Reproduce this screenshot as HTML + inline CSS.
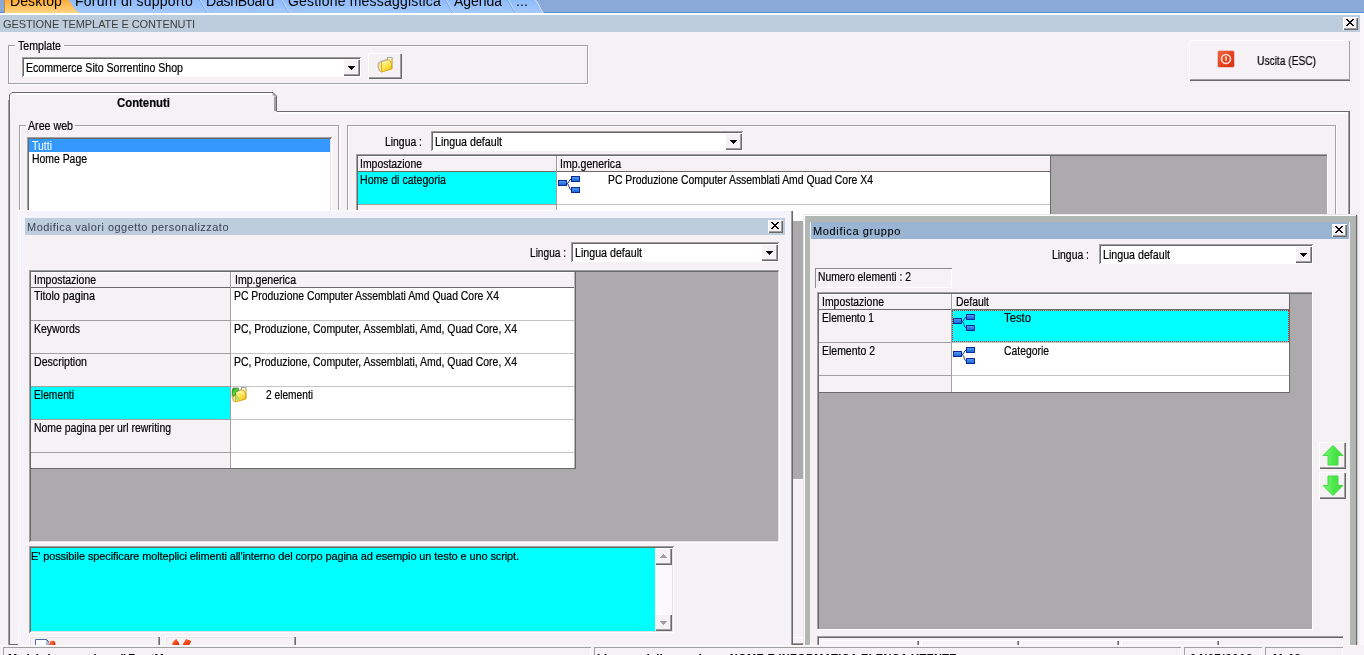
<!DOCTYPE html>
<html><head><meta charset="utf-8"><title>Gestione template e contenuti</title>
<style>
html,body{margin:0;padding:0;}
body{width:1364px;height:655px;overflow:hidden;position:relative;background:#f5f1f5;font-family:"Liberation Sans",sans-serif;font-size:11px;}
div,span,svg{position:absolute;box-sizing:border-box;}
span{white-space:pre;-webkit-text-stroke:0.2px currentColor;}
#w{left:0;top:0;width:1364px;height:655px;overflow:hidden;will-change:transform;}
</style></head><body><div id="w">
<div style="left:0px;top:0px;width:1364px;height:12px;background:#8aa9d7;"></div><div style="left:0px;top:12px;width:1364px;height:1px;background:#5f8fd6;"></div><div style="left:0px;top:13px;width:1364px;height:2px;background:#ffffff;"></div><svg style="left:0;top:0" width="560" height="13" viewBox="0 0 560 13">
<defs>
<linearGradient id="og" x1="0" y1="0" x2="0" y2="1"><stop offset="0" stop-color="#ffab35"/><stop offset="1" stop-color="#ffd585"/></linearGradient>
<linearGradient id="bl" x1="0" y1="0" x2="0" y2="1"><stop offset="0" stop-color="#8fbcfb"/><stop offset="1" stop-color="#a3c9ff"/></linearGradient>
</defs>
<path d="M60 0 L535 0 C538.5 3 539 9 543 13 L60 13 Z" fill="url(#bl)"/>
<path d="M199.1 0 C202.1 3 203.1 9 207.6 13" fill="none" stroke="#7ea6e2" stroke-width="1"/>
<path d="M200.2 0 C203.2 3 204.2 9 208.7 13" fill="none" stroke="#c4dcff" stroke-width="1"/>
<path d="M280.9 0 C283.9 3 284.9 9 289.4 13" fill="none" stroke="#7ea6e2" stroke-width="1"/>
<path d="M282.0 0 C285.0 3 286.0 9 290.5 13" fill="none" stroke="#c4dcff" stroke-width="1"/>
<path d="M445.2 0 C448.2 3 449.2 9 453.7 13" fill="none" stroke="#7ea6e2" stroke-width="1"/>
<path d="M446.3 0 C449.3 3 450.3 9 454.8 13" fill="none" stroke="#c4dcff" stroke-width="1"/>
<path d="M507.2 0 C510.2 3 511.2 9 515.7 13" fill="none" stroke="#7ea6e2" stroke-width="1"/>
<path d="M508.3 0 C511.3 3 512.3 9 516.8 13" fill="none" stroke="#c4dcff" stroke-width="1"/>
<path d="M535.5 0 C539 3 539.5 9 543.5 13" fill="none" stroke="#d8e8ff" stroke-width="1"/>
<path d="M4 0 L68 0 C73 4 73 10 80 13 L4 13 Z" fill="url(#og)"/>
<path d="M4.5 0 V13" stroke="#b98a4a" stroke-width="1"/>
</svg><span style="left:10px;top:-7px;font-size:14px;line-height:16px;color:#000;letter-spacing:0.092px;-webkit-text-stroke:0;">Desktop</span><span style="left:75px;top:-7px;font-size:14px;line-height:16px;color:#000;letter-spacing:0.258px;-webkit-text-stroke:0;">Forum di supporto</span><span style="left:206px;top:-7px;font-size:14px;line-height:16px;color:#000;letter-spacing:-0.227px;-webkit-text-stroke:0;">DashBoard</span><span style="left:288px;top:-7px;font-size:14px;line-height:16px;color:#000;letter-spacing:0.198px;-webkit-text-stroke:0;">Gestione messaggistica</span><span style="left:454px;top:-7px;font-size:14px;line-height:16px;color:#000;letter-spacing:-0.047px;-webkit-text-stroke:0;">Agenda</span><span style="left:516px;top:-7px;font-size:14px;line-height:16px;color:#000;letter-spacing:0.109px;-webkit-text-stroke:0;">...</span><div style="left:0px;top:15px;width:1360px;height:17px;background:#becddd;"></div><div style="left:1360px;top:15px;width:4px;height:640px;background:#f9f7fa;"></div><span style="left:3px;top:18px;font-size:11px;line-height:13px;color:#3c3c3c;letter-spacing:-0.088px;-webkit-text-stroke:0;">GESTIONE TEMPLATE E CONTENUTI</span><div style="left:1343px;top:17px;width:15px;height:13px;background:#f5f1f5;box-shadow: inset 1px 1px 0 #ffffff, inset -1px -1px 0 #696969, inset -2px -2px 0 #a0a0a0;"></div><svg style="left:1346px;top:19px" width="9" height="8" shape-rendering="crispEdges"><path d="M0 0h2v1h-2zM6 0h2v1h-2zM1 1h2v1h-2zM5 1h2v1h-2zM2 2h4v1h-4zM3 3h2v1h-2zM2 4h4v1h-4zM1 5h2v1h-2zM5 5h2v1h-2zM0 6h2v1h-2zM6 6h2v1h-2z" fill="#000"/></svg><div style="left:9px;top:46px;width:580px;height:39px;border:1px solid #ffffff;box-sizing:border-box;"></div><div style="left:8px;top:45px;width:580px;height:39px;border:1px solid #a0a0a0;box-sizing:border-box;"></div><div style="left:15px;top:40px;width:49px;height:12px;background:#f5f1f5;"></div><span style="left:18px;top:39px;font-size:12px;line-height:14px;color:#000;transform:scaleX(0.8829);transform-origin:0 0;">Template</span><div style="left:22px;top:57px;width:339px;height:20px;background:#fff;box-shadow: inset 1px 1px 0 #a0a0a0, inset -1px -1px 0 #ffffff, inset 2px 2px 0 #696969;"></div><div style="left:343px;top:59px;width:17px;height:17px;background:#f5f1f5;box-shadow: inset 1px 1px 0 #ffffff, inset -1px -1px 0 #696969, inset -2px -2px 0 #a0a0a0;"></div><svg style="left:348px;top:66px" width="7" height="4" shape-rendering="crispEdges"><path d="M0 0h7v1h-7zM1 1h5v1h-5zM2 2h3v1h-3zM3 3h1v1h-1z" fill="#000"/></svg><span style="left:26px;top:61px;font-size:12px;line-height:14px;color:#000;transform:scaleX(0.8816);transform-origin:0 0;">Ecommerce Sito Sorrentino Shop</span><div style="left:368px;top:53px;width:34px;height:26px;background:#f5f1f5;box-shadow: inset 1px 1px 0 #ffffff, inset -1px -1px 0 #696969, inset -2px -2px 0 #a0a0a0;"></div><svg style="left:377px;top:57px" width="17" height="17" viewBox="0 0 17 17"><defs>
<linearGradient id="fb1" x1="0" y1="0" x2="0" y2="1"><stop offset="0" stop-color="#ffffff"/><stop offset="0.5" stop-color="#fff6c8"/><stop offset="1" stop-color="#ffe060"/></linearGradient>
<linearGradient id="ff1" x1="0" y1="0" x2="0.6" y2="1"><stop offset="0" stop-color="#fff8b8"/><stop offset="0.5" stop-color="#ffe95a"/><stop offset="1" stop-color="#f6c81c"/></linearGradient>
<linearGradient id="fl1" x1="0" y1="0" x2="1" y2="0"><stop offset="0" stop-color="#f2c040"/><stop offset="0.6" stop-color="#fff2b8"/><stop offset="1" stop-color="#f0c848"/></linearGradient>
</defs>
<path d="M10.5 0.5 H15 V11.6 L10.5 13 Z" fill="url(#fb1)" stroke="#c8920e" stroke-width="1"/>
<path d="M10.2 0.4 H15.4" stroke="#8fb0f0" stroke-width="0.9"/>
<path d="M4.5 4.7 L10.4 3 L12.8 3.3 L14.4 6.4 V12 L4.5 15 Z" fill="url(#ff1)" stroke="#d8a414" stroke-width="0.9"/>
<path d="M6 5.6 C9.5 4.4 12 5 13.4 8.2" fill="none" stroke="#fffbd8" stroke-width="0.8" opacity="0.8"/>
<path d="M1.4 6.6 L4.5 4.7 V15 L2.6 14 L1.4 10.2 Z" fill="url(#fl1)" stroke="#d8a82a" stroke-width="0.8"/>
<path d="M1 6.2 L4.4 4.1 L10.2 2.4" stroke="#9db6f2" stroke-width="0.9" fill="none"/>
<path d="M0.9 6.5 L1 10.5 L2.2 14.2" stroke="#a8bcf0" stroke-width="0.7" fill="none"/>
</svg><div style="left:1189px;top:40px;width:161px;height:41px;background:#f5f1f5;box-shadow: inset 1px 1px 0 #ffffff, inset 0 -1px 0 #696969, inset -1px 0 0 #a0a0a0, inset 0 -2px 0 #a0a0a0;"></div><svg style="left:1217px;top:50px" width="18" height="18" viewBox="0 0 18 18">
<defs><linearGradient id="rg" x1="0" y1="0" x2="1" y2="1"><stop offset="0" stop-color="#f06848"/><stop offset="0.5" stop-color="#e8421c"/><stop offset="1" stop-color="#d83010"/></linearGradient></defs>
<rect x="0.5" y="0.5" width="17" height="17" rx="2" fill="url(#rg)" stroke="#e0c8c8" stroke-width="1"/>
<circle cx="9" cy="9" r="4.5" fill="none" stroke="#fbe0d8" stroke-width="1.6"/>
<rect x="8.2" y="6.4" width="1.6" height="4.4" fill="#fbe0d8"/>
</svg><span style="left:1257px;top:54px;font-size:12px;line-height:14px;color:#000;transform:scaleX(0.8508);transform-origin:0 0;">Uscita (ESC)</span><div style="left:277px;top:111px;width:1073px;height:540px;border-top:1px solid #696969;border-right:2px solid #696969;border-left:0;box-sizing:border-box;"></div><div style="left:277px;top:112px;width:1072px;height:2px;background:#ffffff;"></div><div style="left:1348px;top:112px;width:1px;height:540px;background:#a0a0a0;"></div><svg style="left:8px;top:91px" width="271" height="22" viewBox="8 91 271 22">
<path d="M9.5 113 V95 L12 92.5 H273 L276.5 96 V111.5" fill="#f5f1f5" stroke="none"/>
<path d="M10.5 113 V95.5 L12.5 93.5 H272.5" fill="none" stroke="#fff" stroke-width="1"/>
<path d="M11 94.5 H273" fill="none" stroke="#fff" stroke-width="1"/>
<path d="M275 96.5 V111" fill="none" stroke="#a0a0a0" stroke-width="2"/>
<path d="M272.5 93.5 L275 96" fill="none" stroke="#a0a0a0" stroke-width="1.6"/>
<path d="M9.5 113 V95 L12 92.5 H273 L276.5 96 V111.5" fill="none" stroke="#696969" stroke-width="1"/>
</svg><div style="left:8px;top:100px;width:2px;height:545px;background:#696969;"></div><div style="left:8px;top:100px;width:1px;height:545px;background:#a0a0a0;"></div><div style="left:9px;top:644px;width:9px;height:1px;background:#696969;"></div><span style="left:117px;top:96px;font-size:12px;line-height:14px;color:#000;transform:scaleX(0.9464);transform-origin:0 0;font-weight:bold;">Contenuti</span><div style="left:20px;top:126px;width:320px;height:119px;border:1px solid #ffffff;box-sizing:border-box;"></div><div style="left:19px;top:125px;width:320px;height:119px;border:1px solid #a0a0a0;box-sizing:border-box;"></div><div style="left:26px;top:120px;width:49px;height:12px;background:#f5f1f5;"></div><span style="left:28px;top:119px;font-size:12px;line-height:14px;color:#000;transform:scaleX(0.8875);transform-origin:0 0;">Aree web</span><div style="left:27px;top:137px;width:305px;height:100px;background:#fff;box-shadow: inset 1px 1px 0 #a0a0a0, inset -1px -1px 0 #ffffff, inset 2px 2px 0 #696969, inset -2px -2px 0 #e3e0e4;"></div><div style="left:29px;top:139px;width:301px;height:13px;background:#3399ff;"></div><span style="left:32px;top:139px;font-size:12px;line-height:14px;color:#fff;transform:scaleX(0.8731);transform-origin:0 0;-webkit-text-stroke:0;">Tutti</span><span style="left:32px;top:152px;font-size:12px;line-height:14px;color:#000;transform:scaleX(0.8679);transform-origin:0 0;">Home Page</span><div style="left:348px;top:126px;width:989px;height:119px;border:1px solid #ffffff;box-sizing:border-box;"></div><div style="left:347px;top:125px;width:989px;height:119px;border:1px solid #a0a0a0;box-sizing:border-box;"></div><span style="left:385px;top:135px;font-size:12px;line-height:14px;color:#000;transform:scaleX(0.8664);transform-origin:0 0;">Lingua :</span><div style="left:431px;top:131px;width:312px;height:20px;background:#fff;box-shadow: inset 1px 1px 0 #a0a0a0, inset -1px -1px 0 #ffffff, inset 2px 2px 0 #696969;"></div><div style="left:725px;top:133px;width:17px;height:17px;background:#f5f1f5;box-shadow: inset 1px 1px 0 #ffffff, inset -1px -1px 0 #696969, inset -2px -2px 0 #a0a0a0;"></div><svg style="left:730px;top:140px" width="7" height="4" shape-rendering="crispEdges"><path d="M0 0h7v1h-7zM1 1h5v1h-5zM2 2h3v1h-3zM3 3h1v1h-1z" fill="#000"/></svg><span style="left:435px;top:135px;font-size:12px;line-height:14px;color:#000;transform:scaleX(0.8885);transform-origin:0 0;">Lingua default</span><div style="left:356px;top:154px;width:971px;height:70px;background:#acaaac;"></div><div style="left:356px;top:154px;width:972px;height:1px;background:#a0a0a0;"></div><div style="left:357px;top:155px;width:971px;height:1px;background:#696969;"></div><div style="left:356px;top:154px;width:1px;height:70px;background:#a0a0a0;"></div><div style="left:357px;top:155px;width:1px;height:69px;background:#696969;"></div><div style="left:1327px;top:154px;width:1px;height:70px;background:#ffffff;"></div><div style="left:358px;top:156px;width:693px;height:68px;background:#fff;"></div><div style="left:358px;top:156px;width:693px;height:15px;background:#f5f1f5;"></div><div style="left:358px;top:156px;width:693px;height:1px;background:#ffffff;"></div><div style="left:557px;top:156px;width:1px;height:15px;background:#ffffff;"></div><div style="left:358px;top:172px;width:199px;height:33px;background:#00ffff;"></div><div style="left:358px;top:205px;width:199px;height:19px;background:#f5f1f5;"></div><div style="left:358px;top:171px;width:693px;height:1px;background:#696969;"></div><div style="left:358px;top:204px;width:198px;height:1px;background:#a0a0a0;"></div><div style="left:557px;top:204px;width:493px;height:1px;background:#c4c4c4;"></div><div style="left:556px;top:156px;width:1px;height:68px;background:#a0a0a0;"></div><div style="left:1050px;top:156px;width:1px;height:68px;background:#696969;"></div><span style="left:360px;top:157px;font-size:12px;line-height:14px;color:#000;transform:scaleX(0.8687);transform-origin:0 0;">Impostazione</span><span style="left:560px;top:157px;font-size:12px;line-height:14px;color:#000;transform:scaleX(0.8793);transform-origin:0 0;">Imp.generica</span><span style="left:360px;top:173px;font-size:12px;line-height:14px;color:#000;transform:scaleX(0.8830);transform-origin:0 0;">Home di categoria</span><svg style="left:558px;top:176px" width="22" height="17" viewBox="0 0 22 17">
<defs><linearGradient id="tg1" x1="0" y1="0" x2="0" y2="1"><stop offset="0" stop-color="#5aa0f0"/><stop offset="1" stop-color="#0f5fd0"/></linearGradient></defs>
<path d="M9 7.5 C11 7.5 11 3 13.5 3 M9 7.5 C11 7.5 11 14 13.5 14" fill="none" stroke="#1a2a8a" stroke-width="1"/>
<rect x="0.5" y="4.5" width="8" height="5" fill="url(#tg1)" stroke="#0a2c9c"/>
<rect x="13.5" y="0.5" width="8" height="5" fill="url(#tg1)" stroke="#0a2c9c"/>
<rect x="13.5" y="11.5" width="8" height="5" fill="url(#tg1)" stroke="#0a2c9c"/>
</svg><span style="left:608px;top:173px;font-size:12px;line-height:14px;color:#000;transform:scaleX(0.8675);transform-origin:0 0;">PC Produzione Computer Assemblati Amd Quad Core X4</span><div style="left:792px;top:211px;width:12px;height:10px;background:#fff;"></div><div style="left:793px;top:221px;width:10px;height:258px;background:#acaaac;"></div><div style="left:793px;top:479px;width:10px;height:1px;background:#fff;"></div><div style="left:793px;top:480px;width:10px;height:165px;background:#f5f1f5;"></div><div style="left:793px;top:637px;width:10px;height:1px;background:#ffffff;"></div><div style="left:793px;top:643px;width:10px;height:1px;background:#a0a0a0;"></div><div style="left:793px;top:644px;width:10px;height:1px;background:#696969;"></div><div style="left:19px;top:211px;width:772px;height:440px;background:#f4f2fb;"></div><div style="left:18px;top:210px;width:775px;height:1px;background:#fff;"></div><div style="left:18px;top:210px;width:1px;height:445px;background:#fff;"></div><div style="left:791px;top:211px;width:1px;height:440px;background:#a0a0a0;"></div><div style="left:792px;top:211px;width:1px;height:440px;background:#696969;"></div><div style="left:24px;top:235px;width:762px;height:420px;background:#f5f1f5;"></div><div style="left:25px;top:218px;width:760px;height:17px;background:#becddd;"></div><span style="left:27px;top:221px;font-size:11px;line-height:13px;color:#39424c;letter-spacing:0.472px;-webkit-text-stroke:0;">Modifica valori oggetto personalizzato</span><div style="left:768px;top:220px;width:15px;height:13px;background:#f5f1f5;box-shadow: inset 1px 1px 0 #ffffff, inset -1px -1px 0 #696969, inset -2px -2px 0 #a0a0a0;"></div><svg style="left:771px;top:222px" width="9" height="8" shape-rendering="crispEdges"><path d="M0 0h2v1h-2zM6 0h2v1h-2zM1 1h2v1h-2zM5 1h2v1h-2zM2 2h4v1h-4zM3 3h2v1h-2zM2 4h4v1h-4zM1 5h2v1h-2zM5 5h2v1h-2zM0 6h2v1h-2zM6 6h2v1h-2z" fill="#000"/></svg><span style="left:530px;top:246px;font-size:12px;line-height:14px;color:#000;transform:scaleX(0.8430);transform-origin:0 0;">Lingua :</span><div style="left:571px;top:242px;width:208px;height:20px;background:#fff;box-shadow: inset 1px 1px 0 #a0a0a0, inset -1px -1px 0 #ffffff, inset 2px 2px 0 #696969;"></div><div style="left:761px;top:244px;width:17px;height:17px;background:#f5f1f5;box-shadow: inset 1px 1px 0 #ffffff, inset -1px -1px 0 #696969, inset -2px -2px 0 #a0a0a0;"></div><svg style="left:766px;top:251px" width="7" height="4" shape-rendering="crispEdges"><path d="M0 0h7v1h-7zM1 1h5v1h-5zM2 2h3v1h-3zM3 3h1v1h-1z" fill="#000"/></svg><span style="left:575px;top:246px;font-size:12px;line-height:14px;color:#000;transform:scaleX(0.8885);transform-origin:0 0;">Lingua default</span><div style="left:29px;top:270px;width:751px;height:273px;background:#acaaac;"></div><div style="left:29px;top:270px;width:751px;height:1px;background:#a0a0a0;"></div><div style="left:30px;top:271px;width:749px;height:1px;background:#696969;"></div><div style="left:29px;top:270px;width:1px;height:273px;background:#a0a0a0;"></div><div style="left:30px;top:271px;width:1px;height:271px;background:#696969;"></div><div style="left:778px;top:271px;width:1px;height:271px;background:#e3e0e4;"></div><div style="left:779px;top:270px;width:1px;height:273px;background:#ffffff;"></div><div style="left:30px;top:541px;width:749px;height:1px;background:#e3e0e4;"></div><div style="left:29px;top:542px;width:751px;height:1px;background:#ffffff;"></div><div style="left:31px;top:272px;width:544px;height:196px;background:#fff;"></div><div style="left:31px;top:272px;width:199px;height:196px;background:#f5f1f5;"></div><div style="left:31px;top:272px;width:544px;height:15px;background:#f5f1f5;"></div><div style="left:31px;top:272px;width:544px;height:1px;background:#ffffff;"></div><div style="left:231px;top:272px;width:1px;height:15px;background:#ffffff;"></div><div style="left:31px;top:387px;width:199px;height:33px;background:#00ffff;"></div><div style="left:31px;top:287px;width:544px;height:1px;background:#696969;"></div><div style="left:31px;top:320px;width:199px;height:1px;background:#a0a0a0;"></div><div style="left:231px;top:320px;width:344px;height:1px;background:#c4c4c4;"></div><div style="left:31px;top:353px;width:199px;height:1px;background:#a0a0a0;"></div><div style="left:231px;top:353px;width:344px;height:1px;background:#c4c4c4;"></div><div style="left:31px;top:386px;width:199px;height:1px;background:#a0a0a0;"></div><div style="left:231px;top:386px;width:344px;height:1px;background:#c4c4c4;"></div><div style="left:31px;top:419px;width:199px;height:1px;background:#a0a0a0;"></div><div style="left:231px;top:419px;width:344px;height:1px;background:#c4c4c4;"></div><div style="left:31px;top:452px;width:199px;height:1px;background:#a0a0a0;"></div><div style="left:231px;top:452px;width:344px;height:1px;background:#c4c4c4;"></div><div style="left:230px;top:272px;width:1px;height:197px;background:#a0a0a0;"></div><div style="left:574px;top:272px;width:1px;height:197px;background:#b4b4b4;"></div><div style="left:575px;top:272px;width:1px;height:197px;background:#696969;"></div><div style="left:31px;top:468px;width:545px;height:1px;background:#696969;"></div><span style="left:34px;top:273px;font-size:12px;line-height:14px;color:#000;transform:scaleX(0.8687);transform-origin:0 0;">Impostazione</span><span style="left:235px;top:273px;font-size:12px;line-height:14px;color:#000;transform:scaleX(0.8793);transform-origin:0 0;">Imp.generica</span><span style="left:34px;top:289px;font-size:12px;line-height:14px;color:#000;transform:scaleX(0.8934);transform-origin:0 0;">Titolo pagina</span><span style="left:34px;top:322px;font-size:12px;line-height:14px;color:#000;transform:scaleX(0.8731);transform-origin:0 0;">Keywords</span><span style="left:34px;top:355px;font-size:12px;line-height:14px;color:#000;transform:scaleX(0.8829);transform-origin:0 0;">Description</span><span style="left:34px;top:388px;font-size:12px;line-height:14px;color:#000;transform:scaleX(0.8568);transform-origin:0 0;">Elementi</span><span style="left:34px;top:421px;font-size:12px;line-height:14px;color:#000;transform:scaleX(0.8704);transform-origin:0 0;">Nome pagina per url rewriting</span><span style="left:234px;top:289px;font-size:12px;line-height:14px;color:#000;transform:scaleX(0.8675);transform-origin:0 0;">PC Produzione Computer Assemblati Amd Quad Core X4</span><span style="left:234px;top:322px;font-size:12px;line-height:14px;color:#000;transform:scaleX(0.8712);transform-origin:0 0;">PC, Produzione, Computer, Assemblati, Amd, Quad Core, X4</span><span style="left:234px;top:355px;font-size:12px;line-height:14px;color:#000;transform:scaleX(0.8712);transform-origin:0 0;">PC, Produzione, Computer, Assemblati, Amd, Quad Core, X4</span><svg style="left:231px;top:387px" width="17" height="17" viewBox="0 0 17 17"><defs>
<linearGradient id="fb2" x1="0" y1="0" x2="0" y2="1"><stop offset="0" stop-color="#ffffff"/><stop offset="0.5" stop-color="#fff6c8"/><stop offset="1" stop-color="#ffe060"/></linearGradient>
<linearGradient id="ff2" x1="0" y1="0" x2="0.6" y2="1"><stop offset="0" stop-color="#fff8b8"/><stop offset="0.5" stop-color="#ffe95a"/><stop offset="1" stop-color="#f6c81c"/></linearGradient>
<linearGradient id="fl2" x1="0" y1="0" x2="1" y2="0"><stop offset="0" stop-color="#f2c040"/><stop offset="0.6" stop-color="#fff2b8"/><stop offset="1" stop-color="#f0c848"/></linearGradient>
</defs>
<path d="M10.5 0.5 H15 V11.6 L10.5 13 Z" fill="url(#fb2)" stroke="#c8920e" stroke-width="1"/>
<path d="M10.2 0.4 H15.4" stroke="#8fb0f0" stroke-width="0.9"/>
<path d="M4.5 4.7 L10.4 3 L12.8 3.3 L14.4 6.4 V12 L4.5 15 Z" fill="url(#ff2)" stroke="#d8a414" stroke-width="0.9"/>
<path d="M6 5.6 C9.5 4.4 12 5 13.4 8.2" fill="none" stroke="#fffbd8" stroke-width="0.8" opacity="0.8"/>
<path d="M1.4 6.6 L4.5 4.7 V15 L2.6 14 L1.4 10.2 Z" fill="url(#fl2)" stroke="#d8a82a" stroke-width="0.8"/>
<path d="M1 6.2 L4.4 4.1 L10.2 2.4" stroke="#9db6f2" stroke-width="0.9" fill="none"/>
<path d="M0.9 6.5 L1 10.5 L2.2 14.2" stroke="#a8bcf0" stroke-width="0.7" fill="none"/>
<defs><linearGradient id="ga" x1="0" y1="0" x2="1" y2="1"><stop offset="0" stop-color="#0c7c0c"/><stop offset="0.45" stop-color="#58dc40"/><stop offset="1" stop-color="#0a8a10"/></linearGradient></defs>
<path d="M5 7.2 L9.2 12.2 L5.4 12.8 Z" fill="#8ade6a" opacity="0.75"/>
<path d="M2.2 1 L7.4 1 L7.2 4 C5.2 3.6 4.2 5.4 4.8 7.6 L2.4 9.6 C0.6 6.4 0.8 3 2.2 1 Z" fill="url(#ga)" stroke="#0a6a0a" stroke-width="0.5"/>
<path d="M1.6 1.2 L2.2 0.6 L7.2 0.6" stroke="#f0a8e8" stroke-width="0.6" fill="none" opacity="0.7"/></svg><span style="left:266px;top:388px;font-size:12px;line-height:14px;color:#000;transform:scaleX(0.8488);transform-origin:0 0;">2 elementi</span><div style="left:29px;top:546px;width:645px;height:87px;background:#00ffff;box-shadow: inset 1px 1px 0 #a0a0a0, inset -1px -1px 0 #ffffff, inset 2px 2px 0 #696969, inset -2px -2px 0 #e3e0e4;"></div><div style="left:655px;top:548px;width:17px;height:83px;background:#fbf9fb;"></div><div style="left:655px;top:548px;width:17px;height:17px;background:#f5f1f5;box-shadow: inset 1px 1px 0 #ffffff, inset -1px -1px 0 #696969, inset -2px -2px 0 #a0a0a0;"></div><div style="left:655px;top:614px;width:17px;height:17px;background:#f5f1f5;box-shadow: inset 1px 1px 0 #ffffff, inset -1px -1px 0 #696969, inset -2px -2px 0 #a0a0a0;"></div><svg style="left:660px;top:554px" width="7" height="4" shape-rendering="crispEdges"><path d="M3 0h1v1h-1zM2 1h3v1h-3zM1 2h5v1h-5zM0 3h7v1h-7z" fill="#a0a0a0"/></svg><svg style="left:660px;top:621px" width="7" height="4" shape-rendering="crispEdges"><path d="M0 0h7v1h-7zM1 1h5v1h-5zM2 2h3v1h-3zM3 3h1v1h-1z" fill="#a0a0a0"/></svg><span style="left:31px;top:550px;font-size:11px;line-height:13px;color:#000;letter-spacing:-0.113px;">E&#x27; possibile specificare molteplici elimenti all&#x27;interno del corpo pagina ad esempio un testo e uno script.</span><div style="left:29px;top:636px;width:131px;height:20px;background:#f5f1f5;box-shadow: inset 1px 1px 0 #ffffff, inset -1px -1px 0 #696969, inset -2px -2px 0 #a0a0a0, inset 2px 2px 0 #e9e5e9;"></div><div style="left:165px;top:636px;width:131px;height:20px;background:#f5f1f5;box-shadow: inset 1px 1px 0 #ffffff, inset -1px -1px 0 #696969, inset -2px -2px 0 #a0a0a0, inset 2px 2px 0 #e9e5e9;"></div><svg style="left:34px;top:638px" width="24" height="8" viewBox="34 638 24 8">
<defs><radialGradient id="rb" cx="0.35" cy="0.3" r="0.8"><stop offset="0" stop-color="#ff7a48"/><stop offset="0.6" stop-color="#e83c18"/><stop offset="1" stop-color="#a01008"/></radialGradient></defs>
<path d="M35.5 646 V639.5 H46.5 L48 641 V646 Z" fill="#fff" stroke="#4a6aa8" stroke-width="1"/>
<path d="M46.8 640 V646" stroke="#a8c0dc" stroke-width="1.6"/>
<path d="M46.5 639.5 L48.6 641.6" stroke="#34508c" stroke-width="1"/>
<ellipse cx="52.4" cy="644.2" rx="3" ry="3.4" fill="url(#rb)"/>
</svg><svg style="left:170px;top:638px" width="24" height="8" viewBox="170 638 24 8">
<defs><linearGradient id="rb2" x1="0" y1="0" x2="1" y2="1"><stop offset="0" stop-color="#ff7040"/><stop offset="0.6" stop-color="#f04418"/><stop offset="1" stop-color="#b01808"/></linearGradient></defs>
<path d="M172 646 L172.6 642.5 L174.5 640.6 L176.4 638.8 L177.2 640.6 L178.6 642.2 L180 646 Z" fill="url(#rb2)"/>
<path d="M181.8 646 L185.8 639.6 L186.4 638.8 L187.2 639.8 L190 640.2 L191.2 641.6 L188.6 646 Z" fill="url(#rb2)"/>
</svg><div style="left:803px;top:214px;width:555px;height:440px;background:#e9e6ea;"></div><div style="left:804px;top:215px;width:553px;height:440px;background:#fff;"></div><div style="left:805px;top:216px;width:551px;height:440px;background:#b3b7b3;"></div><div style="left:1356px;top:215px;width:1px;height:440px;background:#696969;"></div><div style="left:1357px;top:215px;width:1px;height:440px;background:#d0ced0;"></div><div style="left:810px;top:222px;width:540px;height:440px;background:#f5f1f5;"></div><div style="left:811px;top:222px;width:538px;height:17px;background:#9ab5d3;"></div><span style="left:813px;top:225px;font-size:11px;line-height:13px;color:#000;letter-spacing:0.648px;-webkit-text-stroke:0.08px currentColor;">Modifica gruppo</span><div style="left:1332px;top:224px;width:15px;height:13px;background:#f5f1f5;box-shadow: inset 1px 1px 0 #ffffff, inset -1px -1px 0 #696969, inset -2px -2px 0 #a0a0a0;"></div><svg style="left:1335px;top:226px" width="9" height="8" shape-rendering="crispEdges"><path d="M0 0h2v1h-2zM6 0h2v1h-2zM1 1h2v1h-2zM5 1h2v1h-2zM2 2h4v1h-4zM3 3h2v1h-2zM2 4h4v1h-4zM1 5h2v1h-2zM5 5h2v1h-2zM0 6h2v1h-2zM6 6h2v1h-2z" fill="#000"/></svg><span style="left:1052px;top:248px;font-size:12px;line-height:14px;color:#000;transform:scaleX(0.8664);transform-origin:0 0;">Lingua :</span><div style="left:1099px;top:244px;width:214px;height:20px;background:#fff;box-shadow: inset 1px 1px 0 #a0a0a0, inset -1px -1px 0 #ffffff, inset 2px 2px 0 #696969;"></div><div style="left:1295px;top:246px;width:17px;height:17px;background:#f5f1f5;box-shadow: inset 1px 1px 0 #ffffff, inset -1px -1px 0 #696969, inset -2px -2px 0 #a0a0a0;"></div><svg style="left:1300px;top:253px" width="7" height="4" shape-rendering="crispEdges"><path d="M0 0h7v1h-7zM1 1h5v1h-5zM2 2h3v1h-3zM3 3h1v1h-1z" fill="#000"/></svg><span style="left:1103px;top:248px;font-size:12px;line-height:14px;color:#000;transform:scaleX(0.8885);transform-origin:0 0;">Lingua default</span><div style="left:815px;top:268px;width:137px;height:20px;background:#f5f1f5;box-shadow: inset 1px 1px 0 #8c8c8c, inset -1px -1px 0 #ffffff;"></div><span style="left:818px;top:270px;font-size:12px;line-height:14px;color:#000;transform:scaleX(0.8607);transform-origin:0 0;">Numero elementi : 2</span><div style="left:817px;top:292px;width:495px;height:337px;background:#acaaac;"></div><div style="left:817px;top:292px;width:496px;height:1px;background:#a0a0a0;"></div><div style="left:818px;top:293px;width:494px;height:1px;background:#696969;"></div><div style="left:817px;top:292px;width:1px;height:338px;background:#a0a0a0;"></div><div style="left:818px;top:293px;width:1px;height:336px;background:#696969;"></div><div style="left:1312px;top:292px;width:1px;height:338px;background:#ffffff;"></div><div style="left:817px;top:629px;width:496px;height:1px;background:#ffffff;"></div><div style="left:819px;top:294px;width:470px;height:98px;background:#fff;"></div><div style="left:819px;top:294px;width:132px;height:98px;background:#f5f1f5;"></div><div style="left:819px;top:294px;width:470px;height:15px;background:#f5f1f5;"></div><div style="left:819px;top:294px;width:470px;height:1px;background:#ffffff;"></div><div style="left:952px;top:294px;width:1px;height:15px;background:#ffffff;"></div><div style="left:952px;top:310px;width:337px;height:32px;background:#00ffff;outline:1px dotted #f02020;outline-offset:-1px;"></div><div style="left:819px;top:309px;width:470px;height:1px;background:#696969;"></div><div style="left:819px;top:342px;width:132px;height:1px;background:#a0a0a0;"></div><div style="left:952px;top:342px;width:337px;height:1px;background:#c4c4c4;"></div><div style="left:819px;top:375px;width:132px;height:1px;background:#a0a0a0;"></div><div style="left:952px;top:375px;width:337px;height:1px;background:#c4c4c4;"></div><div style="left:951px;top:294px;width:1px;height:99px;background:#a0a0a0;"></div><div style="left:1289px;top:294px;width:1px;height:99px;background:#696969;"></div><div style="left:819px;top:392px;width:471px;height:1px;background:#696969;"></div><span style="left:822px;top:295px;font-size:12px;line-height:14px;color:#000;transform:scaleX(0.8687);transform-origin:0 0;">Impostazione</span><span style="left:956px;top:295px;font-size:12px;line-height:14px;color:#000;transform:scaleX(0.8677);transform-origin:0 0;">Default</span><span style="left:822px;top:311px;font-size:12px;line-height:14px;color:#000;transform:scaleX(0.8566);transform-origin:0 0;">Elemento 1</span><span style="left:822px;top:344px;font-size:12px;line-height:14px;color:#000;transform:scaleX(0.8731);transform-origin:0 0;">Elemento 2</span><svg style="left:953px;top:314px" width="22" height="17" viewBox="0 0 22 17">
<defs><linearGradient id="tg2" x1="0" y1="0" x2="0" y2="1"><stop offset="0" stop-color="#5aa0f0"/><stop offset="1" stop-color="#0f5fd0"/></linearGradient></defs>
<path d="M9 7.5 C11 7.5 11 3 13.5 3 M9 7.5 C11 7.5 11 14 13.5 14" fill="none" stroke="#1a2a8a" stroke-width="1"/>
<rect x="0.5" y="4.5" width="8" height="5" fill="url(#tg2)" stroke="#0a2c9c"/>
<rect x="13.5" y="0.5" width="8" height="5" fill="url(#tg2)" stroke="#0a2c9c"/>
<rect x="13.5" y="11.5" width="8" height="5" fill="url(#tg2)" stroke="#0a2c9c"/>
</svg><svg style="left:953px;top:347px" width="22" height="17" viewBox="0 0 22 17">
<defs><linearGradient id="tg3" x1="0" y1="0" x2="0" y2="1"><stop offset="0" stop-color="#5aa0f0"/><stop offset="1" stop-color="#0f5fd0"/></linearGradient></defs>
<path d="M9 7.5 C11 7.5 11 3 13.5 3 M9 7.5 C11 7.5 11 14 13.5 14" fill="none" stroke="#1a2a8a" stroke-width="1"/>
<rect x="0.5" y="4.5" width="8" height="5" fill="url(#tg3)" stroke="#0a2c9c"/>
<rect x="13.5" y="0.5" width="8" height="5" fill="url(#tg3)" stroke="#0a2c9c"/>
<rect x="13.5" y="11.5" width="8" height="5" fill="url(#tg3)" stroke="#0a2c9c"/>
</svg><span style="left:1004px;top:311px;font-size:12px;line-height:14px;color:#000;transform:scaleX(0.9412);transform-origin:0 0;">Testo</span><span style="left:1004px;top:344px;font-size:12px;line-height:14px;color:#000;transform:scaleX(0.8649);transform-origin:0 0;">Categorie</span><div style="left:1319px;top:442px;width:27px;height:27px;background:#f5f1f5;box-shadow: inset 1px 1px 0 #ffffff, inset -1px -1px 0 #696969, inset -2px -2px 0 #a0a0a0;"></div><div style="left:1319px;top:472px;width:27px;height:27px;background:#f5f1f5;box-shadow: inset 1px 1px 0 #ffffff, inset -1px -1px 0 #696969, inset -2px -2px 0 #a0a0a0;"></div><svg style="left:1322px;top:445px" width="22" height="21" viewBox="0 0 22 21">
<defs><linearGradient id="gg" x1="0" y1="0" x2="1" y2="0"><stop offset="0" stop-color="#7cfa7c"/><stop offset="0.5" stop-color="#4ce84c"/><stop offset="1" stop-color="#3cd83c"/></linearGradient></defs>
<path d="M11 0.5 L21 10.5 L16 10.5 L16 20 L6 20 L6 10.5 L1 10.5 Z" fill="url(#gg)" stroke="#48d848" stroke-width="1"/></svg><svg style="left:1322px;top:475px" width="22" height="21" viewBox="0 0 22 21">
<path d="M11 20.5 L21 10.5 L16 10.5 L16 1 L6 1 L6 10.5 L1 10.5 Z" fill="url(#gg)" stroke="#48d848" stroke-width="1"/></svg><div style="left:817px;top:636px;width:526px;height:20px;background:#f5f1f5;box-shadow: inset 1px 1px 0 #a0a0a0, inset 2px 2px 0 #696969, inset -1px 0 0 #ffffff;"></div><div style="left:821px;top:640px;width:98px;height:16px;background:#f5f1f5;box-shadow: inset 1px 1px 0 #ffffff, inset -1px -1px 0 #696969, inset -2px -2px 0 #a0a0a0;"></div><div style="left:921px;top:640px;width:98px;height:16px;background:#f5f1f5;box-shadow: inset 1px 1px 0 #ffffff, inset -1px -1px 0 #696969, inset -2px -2px 0 #a0a0a0;"></div><div style="left:1021px;top:640px;width:98px;height:16px;background:#f5f1f5;box-shadow: inset 1px 1px 0 #ffffff, inset -1px -1px 0 #696969, inset -2px -2px 0 #a0a0a0;"></div><div style="left:1121px;top:640px;width:98px;height:16px;background:#f5f1f5;box-shadow: inset 1px 1px 0 #ffffff, inset -1px -1px 0 #696969, inset -2px -2px 0 #a0a0a0;"></div><div style="left:0px;top:645px;width:1364px;height:10px;background:#f5f1f5;"></div><div style="left:0px;top:645px;width:1358px;height:1px;background:#fdfcfd;"></div><div style="left:3px;top:647px;width:588px;height:10px;background:#f5f1f5;box-shadow: inset 1px 1px 0 #a0a0a0, inset -1px 0 0 #ffffff;"></div><div style="left:594px;top:647px;width:587px;height:10px;background:#f5f1f5;box-shadow: inset 1px 1px 0 #a0a0a0, inset -1px 0 0 #ffffff;"></div><div style="left:1184px;top:647px;width:78px;height:10px;background:#f5f1f5;box-shadow: inset 1px 1px 0 #a0a0a0, inset -1px 0 0 #ffffff;"></div><div style="left:1265px;top:647px;width:78px;height:10px;background:#f5f1f5;box-shadow: inset 1px 1px 0 #a0a0a0, inset -1px 0 0 #ffffff;"></div><span style="left:8px;top:652px;font-size:11px;line-height:13px;color:#000;letter-spacing:-0.392px;font-weight:bold;-webkit-text-stroke:0.08px currentColor;">Modulo in esecuzione: il FrontManager</span><span style="left:597px;top:652px;font-size:11px;line-height:13px;color:#000;letter-spacing:0.313px;font-weight:bold;-webkit-text-stroke:0.08px currentColor;">Licenza della sessione: NOME E INFORMATICA ELENCA UTENTE</span><span style="left:1190px;top:652px;font-size:11px;line-height:13px;color:#000;letter-spacing:0.800px;font-weight:bold;-webkit-text-stroke:0.08px currentColor;">04/07/2013</span><span style="left:1272px;top:652px;font-size:11px;line-height:13px;color:#000;letter-spacing:0.294px;font-weight:bold;-webkit-text-stroke:0.08px currentColor;">11:12</span>
</div></body></html>
